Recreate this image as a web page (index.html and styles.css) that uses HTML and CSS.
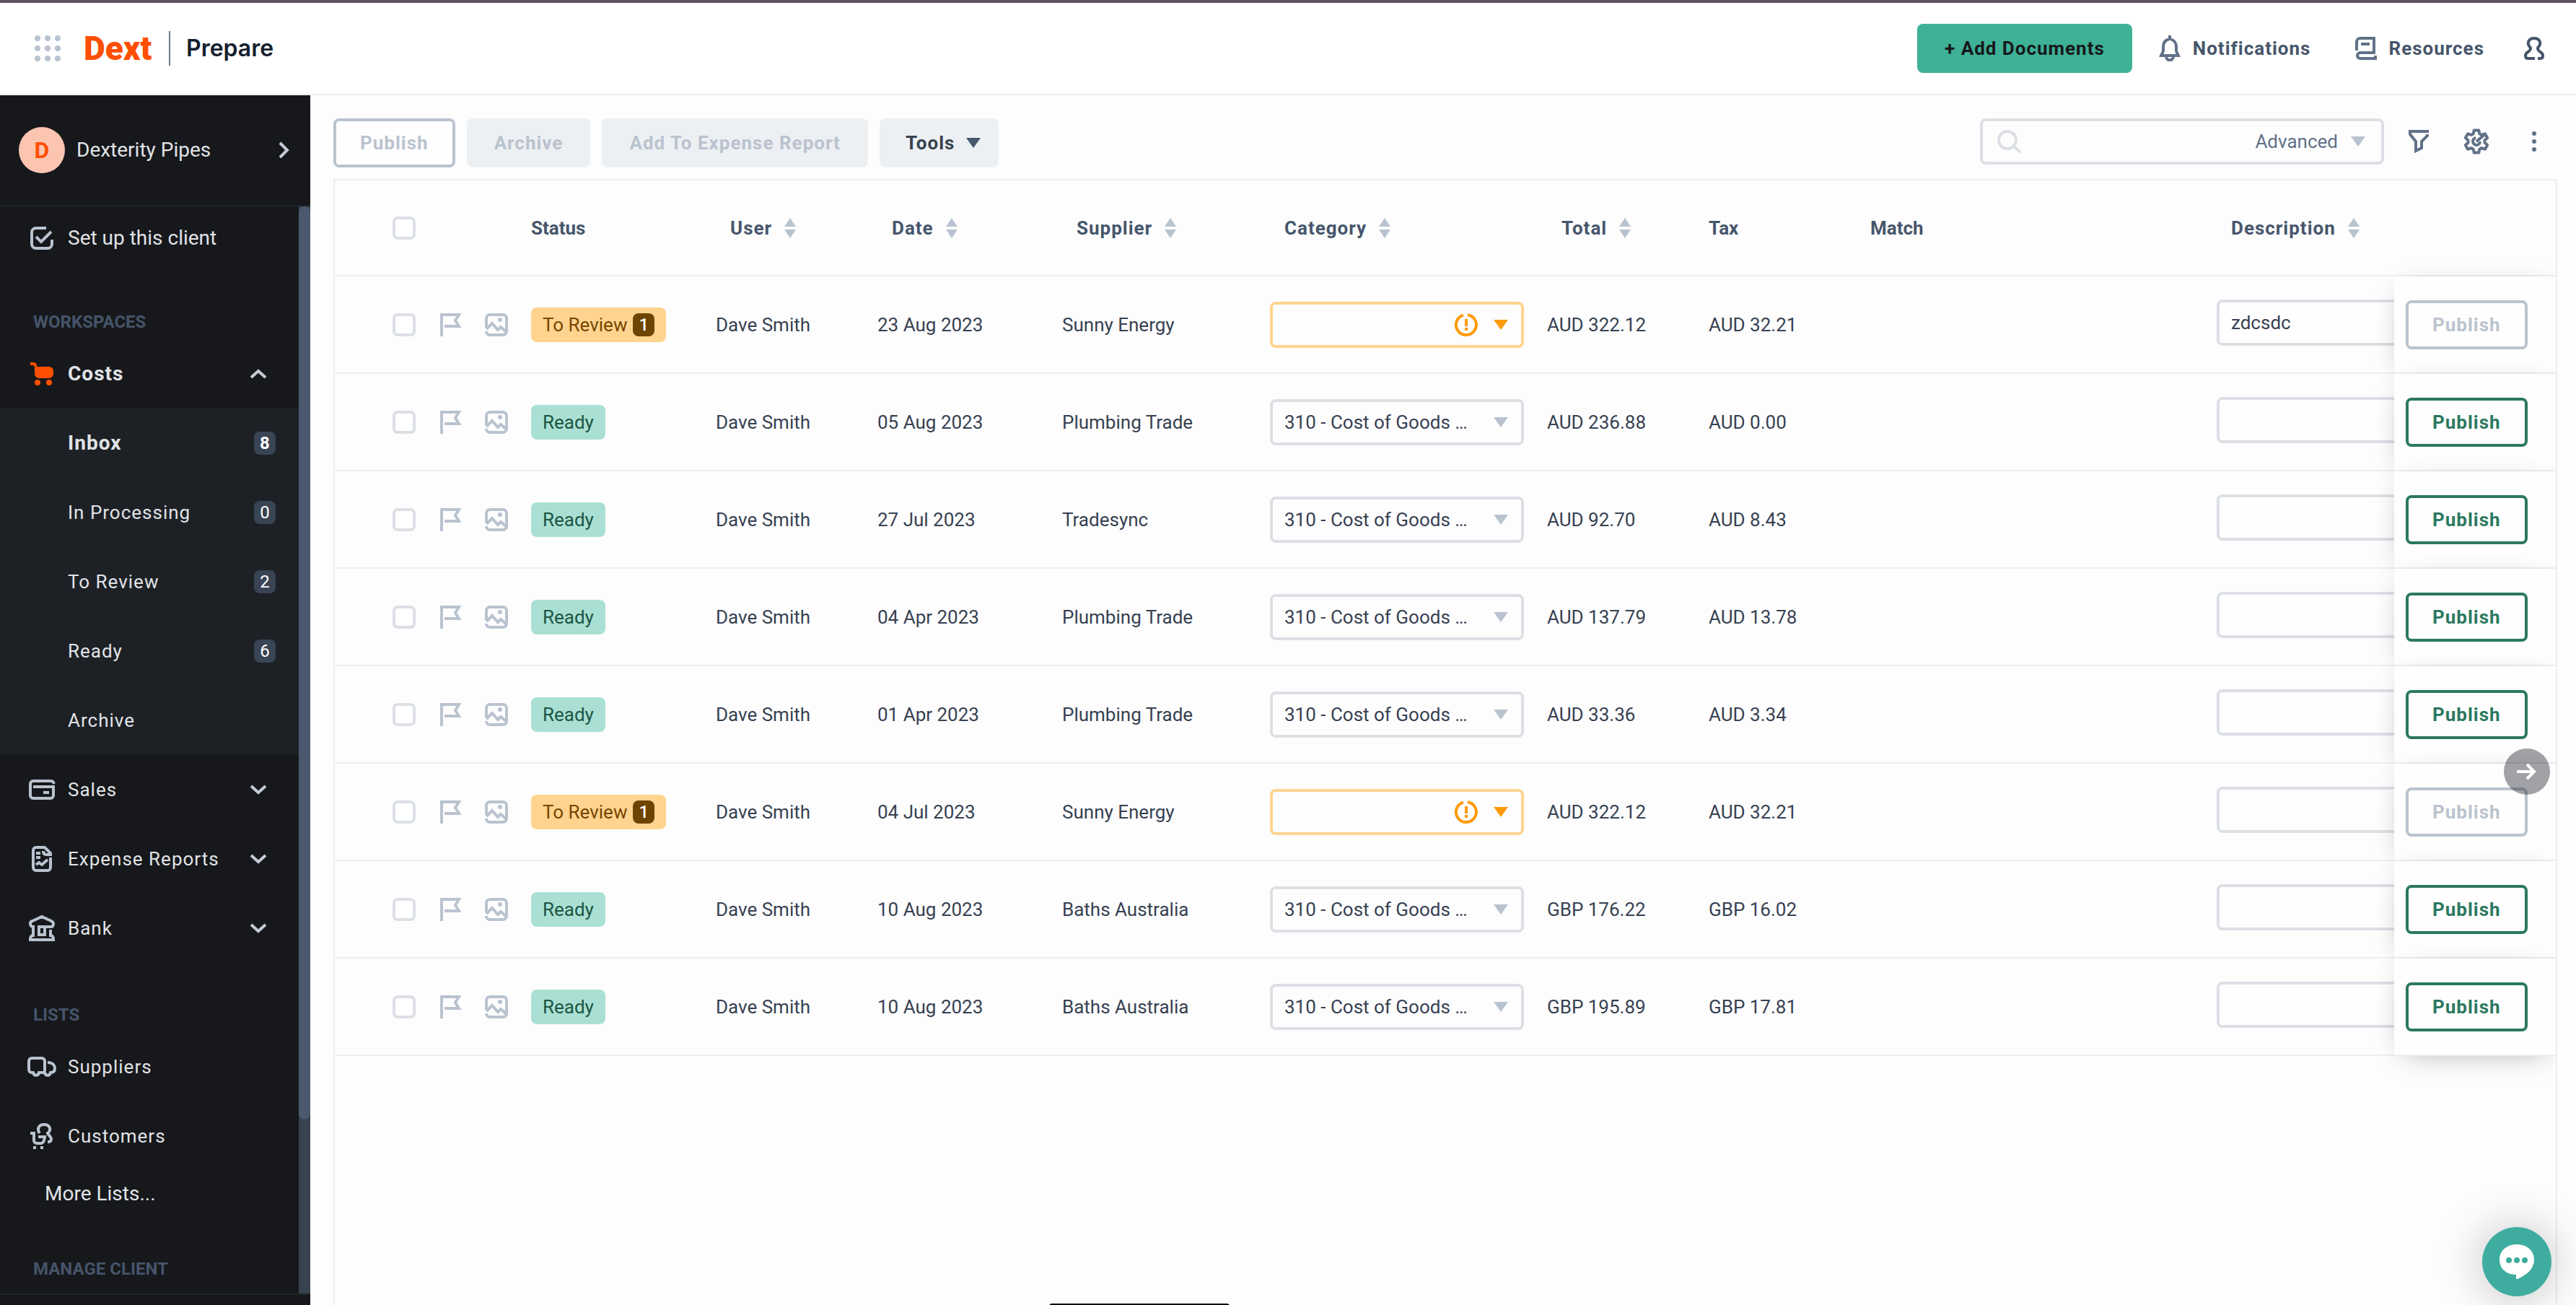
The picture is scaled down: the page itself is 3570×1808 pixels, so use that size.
FILE: index.html
```html
<!DOCTYPE html>
<html lang="en">
<head>
<meta charset="utf-8">
<title>Dext Prepare - Costs Inbox</title>
<meta name="viewport" content="width=device-width, initial-scale=1">
<link rel="stylesheet" href="styles.css">
</head>
<body>
<svg class="sprite" aria-hidden="true">
  <symbol id="i-flag" viewBox="0 0 32 32"><path d="M4 32V2h24l-5 8 5 8H8" fill="none" stroke="currentColor" stroke-width="4"/></symbol>
  <symbol id="i-image" viewBox="0 0 32 32"><path d="M2 20V7a5 5 0 0 1 5-5h18a5 5 0 0 1 5 5v18M30 25a5 5 0 0 1-5 5H7a5 5 0 0 1-5-5" fill="none" stroke="currentColor" stroke-width="4"/><path d="M2 22l8-8 8 9 4-4 8 7" fill="none" stroke="currentColor" stroke-width="4"/><circle cx="21" cy="9" r="3" fill="currentColor"/></symbol>
  <symbol id="i-sort" viewBox="0 0 16 28"><path d="M8 0l8 12H0zM0 16h16L8 28z" fill="currentColor"/></symbol>
  <symbol id="i-caret" viewBox="0 0 20 14"><path d="M0 0h20L10 14z" fill="currentColor"/></symbol>
  <symbol id="i-warn" viewBox="0 0 32 32"><path d="M18 2.200a14 14 0 1 1-6 .4" fill="none" stroke="currentColor" stroke-width="4"/><path d="M16 8v10M16 20v4" stroke="currentColor" stroke-width="4"/></symbol>
  <symbol id="i-down" viewBox="0 0 24 14"><path d="M2 2l10 9L22 2" fill="none" stroke="currentColor" stroke-width="4"/></symbol>
</svg>

<div class="app">
<header class="topbar">
  <div class="brand">
    <button class="icon-btn grid-btn" aria-label="Apps"><svg width="36" height="36" viewBox="0 0 36 36" fill="currentColor"><circle cx="4" cy="4" r="4"/><circle cx="18" cy="4" r="4"/><circle cx="32" cy="4" r="4"/><circle cx="4" cy="18" r="4"/><circle cx="18" cy="18" r="4"/><circle cx="32" cy="18" r="4"/><circle cx="4" cy="32" r="4"/><circle cx="18" cy="32" r="4"/><circle cx="32" cy="32" r="4"/></svg></button>
    <a class="logo" href="#">Dext</a>
    <span class="divider"></span>
    <span class="product">Prepare</span>
  </div>
  <nav class="top-actions" aria-label="Account">
    <button class="btn btn-add">+ Add Documents</button>
    <a class="top-link" href="#"><svg width="32" height="36" viewBox="0 0 32 36" fill="none" stroke="currentColor" stroke-width="4"><path d="M14 5.500C9 7 7 11 7 16v5c0 3-2 4-3 7h24c-1-3-3-4-3-7v-5c0-5-3-9-7-10.500M16 0v7"/><path d="M11 29c0 7 10 7 10 0"/></svg>Notifications</a>
    <a class="top-link resources" href="#"><svg width="32" height="32" viewBox="0 0 32 32" fill="none" stroke="currentColor" stroke-width="4"><path d="M4 19V7a5 5 0 0 1 5-5h19v20H9a4 4 0 0 0 0 8h21v-4"/><path d="M10 10h12"/></svg>Resources</a>
    <button class="icon-btn profile" aria-label="Profile"><svg width="32" height="32" viewBox="0 0 32 32" fill="none" stroke="currentColor" stroke-width="4"><path d="M17 30H8c-5 0-5-5-2-8 3-2 7-5 4-8-5-6-1-12 6-12s11 6 6 12c-3 3 1 6 4 8 3 3 3 8-2 8h-3"/></svg></button>
  </nav>
</header>

<div class="body">
<aside class="sidebar">
  <button class="client"><span class="avatar">D</span><span class="client-name">Dexterity Pipes</span><svg width="16" height="24" viewBox="0 0 16 24" fill="none" stroke="currentColor" stroke-width="4"><path d="M2 2l10 10L2 22"/></svg></button>
  <div class="side-scroll">
    <nav class="side-nav" aria-label="Main">
      <a class="nav-item setup" href="#"><svg class="nav-icon" viewBox="0 0 40 40"><path d="M26 6H12a6 6 0 0 0-6 6v16a6 6 0 0 0 6 6h16a6 6 0 0 0 6-6v-6M12 18l7 7L33 11"/></svg>Set up this client</a>
      <h2 class="nav-title">WORKSPACES</h2>
      <button class="nav-item active"><svg class="nav-icon solid" viewBox="0 0 40 40"><path d="M4 4h5a5 5 0 0 1 4 4v2h17a6 6 0 0 1 6 6v4a6 6 0 0 1-6 6H16a6 6 0 0 1-6-6V10L8 8H4z"/><circle cx="14" cy="32" r="4"/><circle cx="30" cy="32" r="4"/></svg>Costs<svg class="chev up" width="24" height="14"><use href="#i-down"/></svg></button>
      <div class="subnav">
        <a class="nav-item active" href="#">Inbox<span class="count">8</span></a>
        <a class="nav-item" href="#">In Processing<span class="count">0</span></a>
        <a class="nav-item" href="#">To Review<span class="count">2</span></a>
        <a class="nav-item" href="#">Ready<span class="count">6</span></a>
        <a class="nav-item" href="#">Archive</a>
      </div>
      <button class="nav-item"><svg class="nav-icon" viewBox="0 0 40 40"><path d="M37 12c-1-3-2-4-5-4H8a4 4 0 0 0-4 4v16a4 4 0 0 0 4 4h24a4 4 0 0 0 4-4V16H8M22 24h8"/></svg>Sales<svg class="chev" width="24" height="14"><use href="#i-down"/></svg></button>
      <button class="nav-item"><svg class="nav-icon" viewBox="0 0 40 40"><path d="M32 18v14a4 4 0 0 1-4 4H12a4 4 0 0 1-4-4V8a4 4 0 0 1 4-4h12l8 8v2h-6c-3 0-4-2-4-5M12 12h6M12 18h6M12 28l4-3 4 3 8-7"/></svg>Expense Reports<svg class="chev" width="24" height="14"><use href="#i-down"/></svg></button>
      <button class="nav-item"><svg class="nav-icon" viewBox="0 0 40 40"><path d="M16 18v11h8v-9M14 18h20q2-1 2-5-1-2-3-3L20 4 7 10q-3 1-3 3 0 5 4 5v12q-4 0-4 6h32q0-6-4-6v-8"/></svg>Bank<svg class="chev" width="24" height="14"><use href="#i-down"/></svg></button>
      <h2 class="nav-title">LISTS</h2>
      <a class="nav-item" href="#"><svg class="nav-icon" viewBox="0 0 40 40"><path d="M24 26V12a4 4 0 0 0-4-4H6a4 4 0 0 0-4 4v12a4 4 0 0 0 4 4h2c1 5 7 5 8 0h8c1 5 7 5 8 0 4 0 6-2 6-6 0-4-3-8-10-8"/></svg>Suppliers</a>
      <a class="nav-item" href="#"><svg class="nav-icon" viewBox="0 0 40 40"><path d="M17 16c-4-5-2-12 6-12s11 7 5 12c2 4 5 5 5 8s-2 4-5 4M4 16h5v10a4 4 0 0 0 4 4h6q4 0 5-9h-9M8 36h4M18 36h4"/></svg>Customers</a>
      <a class="nav-item more" href="#">More Lists...</a>
      <h2 class="nav-title">MANAGE CLIENT</h2>
    </nav>
    <div class="track"><div class="thumb"></div></div>
  </div>
  <div class="side-foot"></div>
</aside>

<main class="main">
  <div class="toolbar">
    <button class="btn btn-outline" disabled>Publish</button>
    <button class="btn" disabled>Archive</button>
    <button class="btn" disabled>Add To Expense Report</button>
    <button class="btn btn-tools">Tools<svg width="20" height="14"><use href="#i-caret"/></svg></button>
    <div class="search">
      <svg width="36" height="34" viewBox="0 0 36 34" fill="none" stroke="currentColor"><circle cx="14" cy="15" r="12" stroke-width="4"/><path d="M22 23l10 9" stroke-width="4"/></svg>
      <input type="search" aria-label="Search">
      <button class="advanced">Advanced<svg width="20" height="14"><use href="#i-caret"/></svg></button>
    </div>
    <div class="tools">
      <button class="icon-btn" aria-label="Filter"><svg width="28" height="32" viewBox="0 0 28 32" fill="none" stroke="currentColor" stroke-width="4"><path d="M28 2H2v4l8 10v13l8-4v-9l8-8V6"/></svg></button>
      <button class="icon-btn" aria-label="Settings"><svg width="36" height="36" viewBox="-18 -18 36 36" fill="none" stroke="currentColor" stroke-width="4" stroke-linejoin="round"><path d="M-4.300-10.700-3.300-15.600 3.300-15.600 4.300-10.700 7.100-9.100 11.900-10.700 15.200-4.900 11.400-1.600V1.600L15.200 4.900 11.900 10.700 7.100 9.100 4.300 10.700 3.300 15.600H-3.300L-4.300 10.700-7.100 9.100-11.900 10.700-15.200 4.900-11.400 1.600V-1.600L-15.200-4.900-11.900-10.700-7.100-9.100z"/><path d="M12-10 0 0M-1-5a5 5 0 1 0 6 5"/></svg></button>
      <button class="icon-btn" aria-label="More"><svg width="8" height="28" viewBox="0 0 8 28" fill="currentColor"><circle cx="4" cy="3" r="3"/><circle cx="4" cy="14" r="3"/><circle cx="4" cy="25" r="3"/></svg></button>
    </div>
  </div>

  <div class="panel">
  <table class="items">
    <colgroup><col class="c-check"><col class="c-flag"><col class="c-image"><col class="c-status"><col class="c-user"><col class="c-date"><col class="c-supplier"><col class="c-category"><col class="c-total"><col class="c-tax"><col class="c-match"><col class="c-desc"><col class="c-action"></colgroup>
    <thead>
      <tr>
        <th class="check"><input type="checkbox" aria-label="Select all"></th><th></th><th></th>
        <th>Status</th>
        <th><button class="sort">User<svg width="16" height="28"><use href="#i-sort"/></svg></button></th>
        <th><button class="sort">Date<svg width="16" height="28"><use href="#i-sort"/></svg></button></th>
        <th><button class="sort">Supplier<svg width="16" height="28"><use href="#i-sort"/></svg></button></th>
        <th><button class="sort">Category<svg width="16" height="28"><use href="#i-sort"/></svg></button></th>
        <th><button class="sort">Total<svg width="16" height="28"><use href="#i-sort"/></svg></button></th>
        <th>Tax</th>
        <th>Match</th>
        <th><button class="sort">Description<svg width="16" height="28"><use href="#i-sort"/></svg></button></th>
        <th></th>
      </tr>
    </thead>
    <tbody>
      <tr>
        <td class="check"><input type="checkbox" aria-label="Select item 1"></td>
        <td><svg class="mark" role="img" aria-label="Flag"><use href="#i-flag"/></svg></td>
        <td><svg class="mark" role="img" aria-label="Image"><use href="#i-image"/></svg></td>
        <td><span class="pill review">To Review<b>1</b></span></td>
        <td>Dave Smith</td><td>23 Aug 2023</td><td>Sunny Energy</td>
        <td><div class="select warn"><select aria-label="Category"><option></option></select><svg width="32" height="32"><use href="#i-warn"/></svg><svg width="20" height="14"><use href="#i-caret"/></svg></div></td>
        <td>AUD 322.12</td><td>AUD 32.21</td><td></td>
        <td><input class="desc" type="text" aria-label="Description" value="zdcsdc"></td>
        <td class="action"><button class="btn btn-outline" disabled>Publish</button></td>
      </tr>
      <tr>
        <td class="check"><input type="checkbox" aria-label="Select item 2"></td>
        <td><svg class="mark" role="img" aria-label="Flag"><use href="#i-flag"/></svg></td>
        <td><svg class="mark" role="img" aria-label="Image"><use href="#i-image"/></svg></td>
        <td><span class="pill">Ready</span></td>
        <td>Dave Smith</td><td>05 Aug 2023</td><td>Plumbing Trade</td>
        <td><div class="select"><select aria-label="Category"><option>310 - Cost of Goods …</option></select><svg width="20" height="14"><use href="#i-caret"/></svg></div></td>
        <td>AUD 236.88</td><td>AUD 0.00</td><td></td>
        <td><input class="desc" type="text" aria-label="Description"></td>
        <td class="action"><button class="btn btn-outline">Publish</button></td>
      </tr>
      <tr>
        <td class="check"><input type="checkbox" aria-label="Select item 3"></td>
        <td><svg class="mark" role="img" aria-label="Flag"><use href="#i-flag"/></svg></td>
        <td><svg class="mark" role="img" aria-label="Image"><use href="#i-image"/></svg></td>
        <td><span class="pill">Ready</span></td>
        <td>Dave Smith</td><td>27 Jul 2023</td><td>Tradesync</td>
        <td><div class="select"><select aria-label="Category"><option>310 - Cost of Goods …</option></select><svg width="20" height="14"><use href="#i-caret"/></svg></div></td>
        <td>AUD 92.70</td><td>AUD 8.43</td><td></td>
        <td><input class="desc" type="text" aria-label="Description"></td>
        <td class="action"><button class="btn btn-outline">Publish</button></td>
      </tr>
      <tr>
        <td class="check"><input type="checkbox" aria-label="Select item 4"></td>
        <td><svg class="mark" role="img" aria-label="Flag"><use href="#i-flag"/></svg></td>
        <td><svg class="mark" role="img" aria-label="Image"><use href="#i-image"/></svg></td>
        <td><span class="pill">Ready</span></td>
        <td>Dave Smith</td><td>04 Apr 2023</td><td>Plumbing Trade</td>
        <td><div class="select"><select aria-label="Category"><option>310 - Cost of Goods …</option></select><svg width="20" height="14"><use href="#i-caret"/></svg></div></td>
        <td>AUD 137.79</td><td>AUD 13.78</td><td></td>
        <td><input class="desc" type="text" aria-label="Description"></td>
        <td class="action"><button class="btn btn-outline">Publish</button></td>
      </tr>
      <tr>
        <td class="check"><input type="checkbox" aria-label="Select item 5"></td>
        <td><svg class="mark" role="img" aria-label="Flag"><use href="#i-flag"/></svg></td>
        <td><svg class="mark" role="img" aria-label="Image"><use href="#i-image"/></svg></td>
        <td><span class="pill">Ready</span></td>
        <td>Dave Smith</td><td>01 Apr 2023</td><td>Plumbing Trade</td>
        <td><div class="select"><select aria-label="Category"><option>310 - Cost of Goods …</option></select><svg width="20" height="14"><use href="#i-caret"/></svg></div></td>
        <td>AUD 33.36</td><td>AUD 3.34</td><td></td>
        <td><input class="desc" type="text" aria-label="Description"></td>
        <td class="action"><button class="btn btn-outline">Publish</button></td>
      </tr>
      <tr>
        <td class="check"><input type="checkbox" aria-label="Select item 6"></td>
        <td><svg class="mark" role="img" aria-label="Flag"><use href="#i-flag"/></svg></td>
        <td><svg class="mark" role="img" aria-label="Image"><use href="#i-image"/></svg></td>
        <td><span class="pill review">To Review<b>1</b></span></td>
        <td>Dave Smith</td><td>04 Jul 2023</td><td>Sunny Energy</td>
        <td><div class="select warn"><select aria-label="Category"><option></option></select><svg width="32" height="32"><use href="#i-warn"/></svg><svg width="20" height="14"><use href="#i-caret"/></svg></div></td>
        <td>AUD 322.12</td><td>AUD 32.21</td><td></td>
        <td><input class="desc" type="text" aria-label="Description"></td>
        <td class="action"><button class="btn btn-outline" disabled>Publish</button></td>
      </tr>
      <tr>
        <td class="check"><input type="checkbox" aria-label="Select item 7"></td>
        <td><svg class="mark" role="img" aria-label="Flag"><use href="#i-flag"/></svg></td>
        <td><svg class="mark" role="img" aria-label="Image"><use href="#i-image"/></svg></td>
        <td><span class="pill">Ready</span></td>
        <td>Dave Smith</td><td>10 Aug 2023</td><td>Baths Australia</td>
        <td><div class="select"><select aria-label="Category"><option>310 - Cost of Goods …</option></select><svg width="20" height="14"><use href="#i-caret"/></svg></div></td>
        <td>GBP 176.22</td><td>GBP 16.02</td><td></td>
        <td><input class="desc" type="text" aria-label="Description"></td>
        <td class="action"><button class="btn btn-outline">Publish</button></td>
      </tr>
      <tr>
        <td class="check"><input type="checkbox" aria-label="Select item 8"></td>
        <td><svg class="mark" role="img" aria-label="Flag"><use href="#i-flag"/></svg></td>
        <td><svg class="mark" role="img" aria-label="Image"><use href="#i-image"/></svg></td>
        <td><span class="pill">Ready</span></td>
        <td>Dave Smith</td><td>10 Aug 2023</td><td>Baths Australia</td>
        <td><div class="select"><select aria-label="Category"><option>310 - Cost of Goods …</option></select><svg width="20" height="14"><use href="#i-caret"/></svg></div></td>
        <td>GBP 195.89</td><td>GBP 17.81</td><td></td>
        <td><input class="desc" type="text" aria-label="Description"></td>
        <td class="action"><button class="btn btn-outline">Publish</button></td>
      </tr>
    </tbody>
  </table>
  </div>
</main>
</div>
</div>

<button class="scroll-next" aria-label="Scroll right"><svg width="28" height="24" viewBox="0 0 28 24" fill="none" stroke="currentColor" stroke-width="4"><path d="M0 12h24M14 2l10 10-10 10"/></svg></button>
<button class="chat" aria-label="Chat"><svg width="48" height="48" viewBox="0 0 48 48"><path d="M24 0c14 0 24 9 24 21 0 13-10 21-23 27h-2v-6C9 42 0 33 0 21 0 9 10 0 24 0z" fill="#fff"/><g fill="#3eada0"><circle cx="13" cy="22" r="4"/><circle cx="24" cy="22" r="4"/><circle cx="35" cy="22" r="4"/></g></svg></button>
<div class="toast"></div>
</body>
</html>
```
FILE: styles.css
```css
* { box-sizing: border-box; }

body {
  margin: 0;
  background: #fdfdfe;
  color: #374151;
  font-family: Roboto, "Liberation Sans", sans-serif;
  font-size: 26px;
  line-height: 32px;
  overflow: hidden;
}

button, input, select { font: inherit; color: inherit; margin: 0; }
button { border: 0; background: none; padding: 0; cursor: pointer; }
a { color: inherit; text-decoration: none; }
svg { flex: none; display: block; }
.sprite { position: absolute; width: 0; height: 0; }

.app { display: flex; flex-direction: column; height: 100vh; border-top: 4px solid #62525f; }

/* Top bar */
.topbar {
  display: flex;
  align-items: center;
  justify-content: space-between;
  height: 128px;
  flex: none;
  padding: 0 42px 0 48px;
  background: #fff;
  border-bottom: 2px solid #ebeef2;
}
.brand, .top-actions { display: flex; align-items: center; }
.logo {
  min-width: 96px;
  margin-left: 32px;
  font-size: 46px;
  line-height: 64px;
  font-weight: 900;
  color: #ff4f00;
}
.divider { width: 2px; height: 48px; margin: 0 22px; background: #6b7c93; }
.product { font-family: Inter, sans-serif; font-size: 32px; font-weight: 600; line-height: 40px; color: #14202e; }

.btn {
  display: inline-flex;
  align-items: center;
  justify-content: center;
  gap: 16px;
  height: 68px;
  padding: 0 38px;
  border-radius: 8px;
  background: #edf0f3;
  color: #36424f;
  font-weight: 700;
  letter-spacing: 1px;
  white-space: nowrap;
}
.btn:disabled { color: #bac3ce; }
.btn-outline { padding: 0 33px; border: 4px solid #2b7860; background: #fefefe; color: #2b7860; }
.btn-outline:disabled { border-color: #bac3ce; }
.btn-add { background: #3eb196; color: #16181b; }
.top-link { display: flex; align-items: center; gap: 16px; margin-left: 36px; font-weight: 700; letter-spacing: 1px; color: #46566b; }
.top-link svg { color: #617188; }
.resources { margin-left: 60px; }
.icon-btn { display: flex; align-items: center; justify-content: center; color: #617188; }
.icon-btn.grid-btn { color: #b9c3cf; }
.profile { margin-left: 53px; color: #46566b; }

/* Sidebar */
.body { display: flex; flex: 1; min-height: 0; }
.sidebar { display: flex; flex-direction: column; flex: none; width: 430px; background: #16181b; color: #e1e3e7; }
.client {
  display: flex;
  align-items: center;
  flex: none;
  height: 154px;
  padding: 0 28px 0 26px;
  border-bottom: 2px solid #1f242a;
  font-size: 28px;
}
.client svg { margin-left: auto; color: #c3cbd6; }
.avatar {
  width: 64px;
  height: 64px;
  margin-right: 16px;
  border-radius: 50%;
  background: #fcc5b0;
  color: #ff4f00;
  font-size: 32px;
  line-height: 64px;
  font-weight: 700;
}
.side-scroll { display: flex; flex: 1; min-height: 0; }
.side-nav { flex: 1; overflow: hidden; }
.nav-item {
  display: flex;
  align-items: center;
  width: 100%;
  height: 96px;
  padding: 0 44px 0 38px;
  letter-spacing: 1px;
}
.nav-icon { width: 40px; height: 40px; margin-right: 16px; fill: none; stroke: #b9c3cf; stroke-width: 4; }
.nav-icon.solid { fill: #ff4f00; stroke: none; }
.chev { margin-left: auto; color: #c3cbd6; }
.chev.up { transform: rotate(180deg); }
.nav-item.active { font-size: 28px; font-weight: 700; }
.nav-item.setup, .nav-item.more { font-size: 28px; letter-spacing: 0; }
.nav-item.setup { height: 88px; }
.nav-item.more { height: 64px; padding-left: 62px; }
.nav-title { height: 96px; margin: 0; padding: 56px 46px 0; font-size: 24px; line-height: 32px; font-weight: 700; color: #46546a; }
.subnav { background: #1d2126; }
.subnav .nav-item { padding: 0 32px 0 94px; }
.count {
  width: 30px;
  height: 32px;
  margin-left: auto;
  border-radius: 8px;
  background: #394454;
  color: #fff;
  font-size: 24px;
  line-height: 32px;
  letter-spacing: 0;
  text-align: center;
}
.track { width: 16px; background: #394350; }
.thumb { height: 84%; border-radius: 8px; background: #4a596d; }
.side-foot { flex: none; height: 16px; border-top: 2px solid #1f242a; }

/* Toolbar */
.main { display: flex; flex-direction: column; flex: 1; min-width: 0; padding: 32px 26px 0 32px; }
.toolbar { display: flex; align-items: flex-start; gap: 16px; flex: none; height: 84px; }
.btn-tools { padding: 0 25px 0 36px; }
.btn-tools svg { color: #46566b; }
.search {
  display: flex;
  align-items: center;
  width: 560px;
  height: 64px;
  margin-left: auto;
  padding: 0 22px 0 20px;
  border: 4px solid #dce0e5;
  border-radius: 8px;
  color: #dce0e5;
}
.search input { flex: 1; min-width: 0; height: 48px; border: 0; outline: 0; background: none; color: #374151; }
.advanced { display: flex; align-items: center; gap: 18px; color: #617188; }
.advanced svg { color: #b9c3cf; }
.tools { display: flex; height: 64px; margin: 0 -8px; }
.tools .icon-btn { width: 80px; height: 64px; }

/* Items table */
.panel { flex: 1; min-height: 0; overflow: hidden; border: 2px solid #ebeef2; border-bottom: 0; }
.items { width: 100%; table-layout: fixed; border-collapse: separate; border-spacing: 0; }
.c-check { width: 130px; }
.c-flag { width: 62px; }
.c-image { width: 64px; }
.c-status { width: 256px; }
.c-user { width: 224px; }
.c-date { width: 256px; }
.c-supplier { width: 288px; }
.c-category { width: 384px; }
.c-total { width: 224px; }
.c-tax { width: 224px; }
.c-match { width: 480px; }
.c-action { width: 224px; }
.items th { height: 133px; padding: 0 16px; border-bottom: 2px solid #ebeef2; text-align: left; font-weight: 700; color: #46566b; }
.items td { height: 135px; padding: 0 16px; border-bottom: 2px solid #ebeef2; white-space: nowrap; }
.items .check { padding-left: 80px; }
.items input[type="checkbox"] {
  display: block;
  appearance: none;
  width: 32px;
  height: 32px;
  border: 4px solid #dce0e5;
  border-radius: 7px;
  background: #fff;
}
.sort { display: flex; align-items: center; gap: 17px; padding-left: 20px; font-weight: 700; letter-spacing: 1px; }
.sort svg { color: #b9c3cf; }
.mark { width: 32px; height: 32px; color: #b9c3cf; }
.items td:nth-child(2) { padding-left: 14px; }
.pill { display: inline-flex; align-items: center; gap: 8px; height: 48px; padding: 0 16px; border-radius: 8px; background: #aae0d3; color: #1d5645; }
.pill.review { background: #fed48e; color: #774500; }
.pill b { width: 30px; height: 32px; border-radius: 8px; background: #6e4500; color: #fff; font-size: 24px; text-align: center; font-weight: 500; }
.select { display: flex; align-items: center; gap: 16px; height: 64px; padding: 0 18px 0 16px; border: 4px solid #dce0e5; border-radius: 8px; }
.select select { flex: 1; min-width: 0; height: 56px; padding: 0; border: 0; outline: 0; background: none; appearance: none; }
.select svg { color: #b9c3cf; }
.select.warn { border-color: #fed48e; gap: 22px; }
.select.warn svg { color: #ff9a0a; }
.desc { display: block; width: 352px; height: 64px; margin-bottom: 6px; padding: 0 16px; border: 4px solid #dce0e5; border-radius: 8px; outline: 0; background: #fefefe; }
.items .action { position: sticky; right: 0; background: #fefefe; box-shadow: 0 8px 40px -16px rgba(0, 0, 0, 0.4); }

/* Floating controls */
.scroll-next {
  position: fixed;
  right: 36px;
  top: 1037px;
  display: flex;
  align-items: center;
  justify-content: center;
  width: 64px;
  height: 64px;
  border-radius: 50%;
  background: rgba(22, 24, 32, 0.4);
  color: #fff;
}
.chat {
  position: fixed;
  right: 34px;
  bottom: 12px;
  display: flex;
  align-items: center;
  justify-content: center;
  width: 96px;
  height: 96px;
  border-radius: 50%;
  background: #3eada0;
  box-shadow: 0 2px 64px rgba(0, 0, 0, 0.25);
}
.toast { position: fixed; left: 1454px; bottom: -30px; width: 250px; height: 32px; border-radius: 4px; background: #000; }
```
